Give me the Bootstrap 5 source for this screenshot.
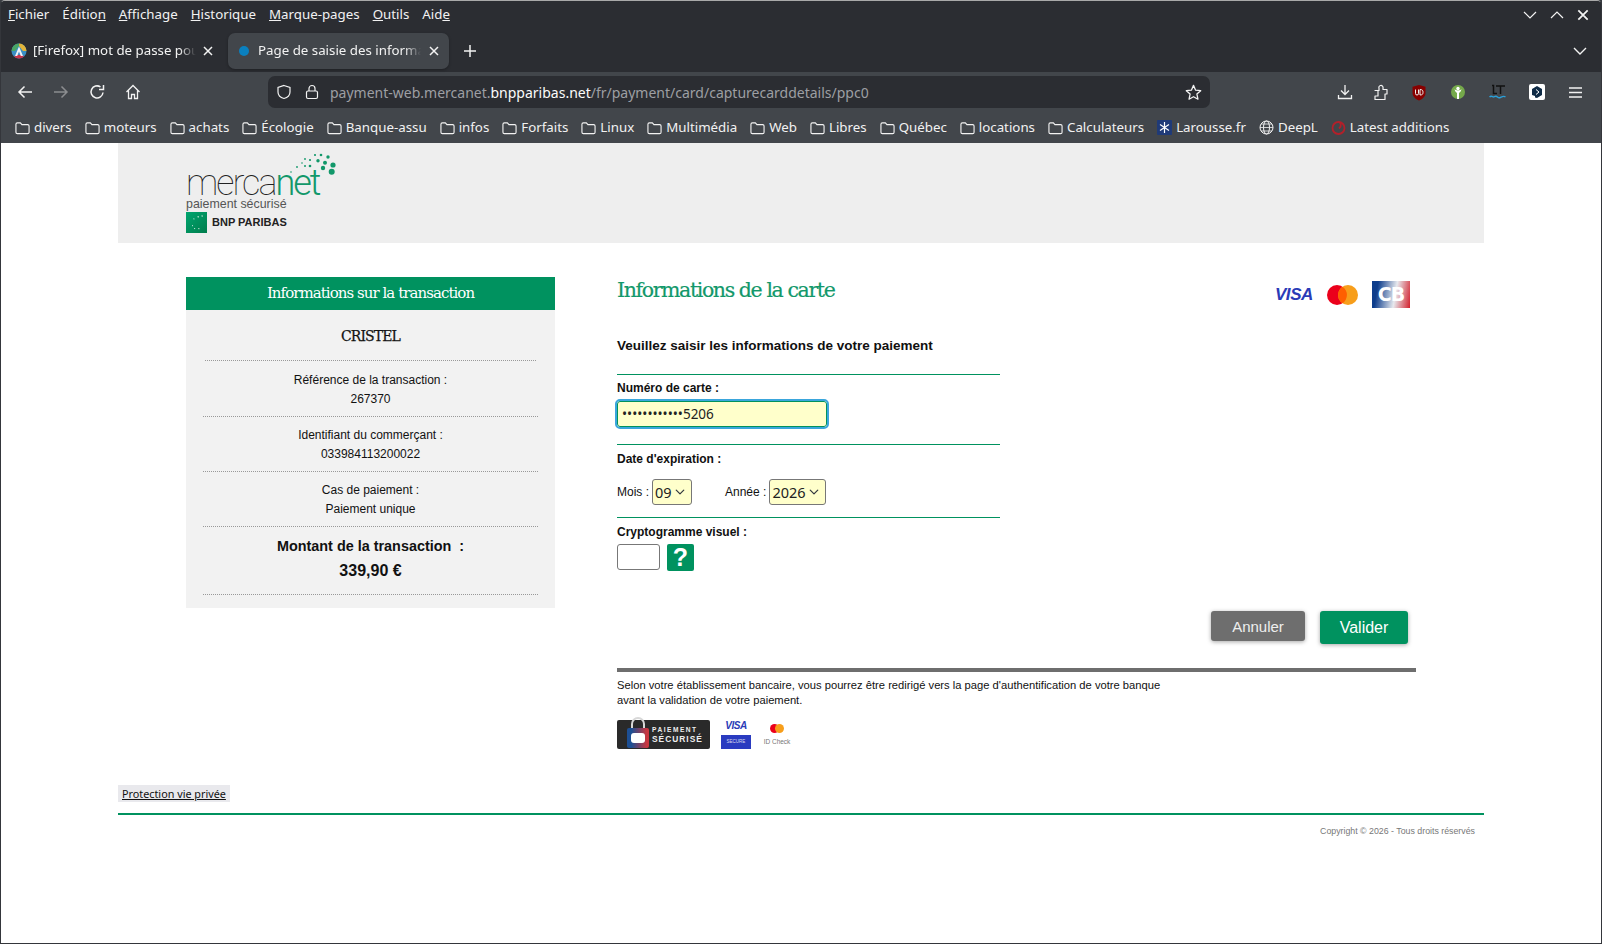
<!DOCTYPE html>
<html lang="fr">
<head>
  <meta charset="UTF-8">
  <meta name="viewport" content="width=device-width, initial-scale=1.0">
  <title>Page de saisie des informations</title>
  <link href="https://cdn.jsdelivr.net/npm/bootstrap@5.3.0/dist/css/bootstrap.min.css" rel="stylesheet">
  <style>
    html, body { height: 100%; }
    body {
      background: #3a3d42;
      font-family: "Liberation Sans", Arial, sans-serif;
      color: #111;
      overflow: hidden;
    }
    .fenetre { height: 944px; border-radius: 5px 5px 0 0; overflow: hidden; border: 1px solid #34363b; border-top-color: #a9a9a9; display: flex; flex-direction: column; }
    .chrome { font-family: "Noto Sans", sans-serif; color: #f2f2f2; font-size: 13.3px; }
    .barre-menu { height: 28px; background: #2b2d32; padding-left: 7px; gap: 13px; flex: none; }
    .barre-menu span { line-height: 1; }
    .fen-btns { gap: 11px; padding-right: 11px; }
    .barre-onglets { height: 43px; background: #2b2d32; flex: none; }
    .onglet { height: 36px; width: 227px; flex: none; padding: 0 14px 0 10px; gap: 6px; border-radius: 7px; }
    .onglet.actif { background: #42464b; width: 221px; gap: 7px; box-shadow: 0 1px 3px rgba(0,0,0,.3); padding: 0 9px; }
    .onglet-titre { flex: 1; white-space: nowrap; overflow: hidden; -webkit-mask-image: linear-gradient(to right, #000 90%, transparent); mask-image: linear-gradient(to right, #000 90%, transparent); }
    .plus-onglet { margin-left: 14px; }
    .chevron-onglets { margin-right: 13px; }
    .barre-outils { height: 40px; background: #42464b; padding: 0 10px 0 0; flex: none; }
    .zone-nav { width: 267px; flex: none; padding-left: 16px; gap: 20px; }
    .zone-url { width: 942px; height: 32px; background: #2b2d32; border-radius: 7px; padding: 0 8px 0 8px; flex: none; }
    .url-txt { font-size: 14px; color: #9d9fa3; margin-left: 10px; flex: 1; white-space: nowrap; }
    .url-txt b { font-weight: 400; color: #fbfbfb; }
    .zone-ext { flex: 1; gap: 23px; padding-left: 127px; }
    .ext-serre { margin-left: -3px; }
    .ext-serre + svg { margin-left: -1px; }
    .barre-favoris { height: 31px; background: #42464b; padding-left: 14px; gap: 13px; flex: none; white-space: nowrap; }
    .favori { gap: 4px; }
    .page { flex: 1; background: #fff; }
    .cadre { width: 1366px; margin-left: 117px; }
    .entete { height: 100px; background: #eee; padding-left: 68px; }
    .logo { width: 150px; position: relative; }
    .logo-mot { font-family: Roboto, sans-serif; font-weight: 100; font-size: 36px; line-height: 30px; letter-spacing: -2px; color: #222; padding-top: 25px; }
    .logo-mot em { font-style: normal; color: #12986a; font-weight: 300; }
    .logo-points { position: absolute; right: 0; top: 10px; }
    .logo-sous { font-size: 12.4px; line-height: 12px; color: #555; }
    .logo-bnp { gap: 5px; margin-top: 2px; font-size: 11px; font-weight: 700; color: #222; }
    .corps { padding: 34px 0 0 68px; gap: 62px; }
    .panneau { width: 369px; flex: none; }
    .panneau-titre { height: 33px; line-height: 32px; background: #00925f; color: #fff; text-align: center; font-family: "DejaVu Serif", serif; font-size: 15px; letter-spacing: -.95px; }
    .panneau-corps { background: #f2f2f2; height: 298px; padding: 0 17px; text-align: center; font-size: 12px; line-height: 19px; }
    .nom-client { font-family: "DejaVu Serif", serif; font-size: 14px; letter-spacing: -.9px; height: 51px; padding-top: 17px; border-bottom: 1px dotted #999; margin: 0 2px; -webkit-text-stroke: .25px #111; }
    .bloc-info { height: 55px; border-bottom: 1px dotted #999; padding-top: 9px; }
    .nom-client + .bloc-info { height: 56px; padding-top: 10px; }
    .bloc-montant { height: 68px; border-bottom: 1px dotted #999; font-weight: 700; font-size: 14.4px; padding-top: 7px; line-height: 24px; }
    .bloc-montant div + div { font-size: 16px; margin-top: 1px; }
    .formulaire { width: 799px; flex: none; }
    .titre-carte { font-family: "DejaVu Serif", serif; font-size: 20.5px; font-weight: 400; color: #12986a; line-height: 26px; letter-spacing: -1.4px; margin: 0; -webkit-text-stroke: .2px #12986a; }
    .logos-cartes { gap: 14px; padding-right: 6px; padding-top: 4px; }
    .visa { font-style: italic; font-weight: 700; color: #2a3bb7; font-size: 17px; line-height: 1; letter-spacing: -.4px; }
    .cb { width: 38px; height: 27px; background: linear-gradient(100deg, #0d3d8c 15%, #e7e9ee 60%, #d3202c); color: #fff; font-family: "DejaVu Sans", sans-serif; font-weight: 700; font-size: 19px; line-height: 27px; letter-spacing: -1px; text-align: center; }
    .consigne { font-size: 13.5px; font-weight: 700; margin: 29px 0 0; line-height: 18px; }
    .champs { width: 383px; margin-top: 19px; }
    .champ { border-top: 1px solid #00925f; padding-top: 7px; }
    .champ-num { height: 70px; padding-top: 6px; }
    .champ-date { height: 73px; }
    .ligne-date { margin-top: 13px; }
    .ligne-crypto { margin-top: 5px; gap: 7px; }
    .etiq { display: block; font-size: 12px; font-weight: 700; line-height: 14px; margin: 0; }
    .saisie-num { display: block; width: 210px; height: 26px; margin-top: 6px; background: #ffffcb; border: 1px solid #00925f; border-radius: 3px; outline: 2px solid #3aa6dc; padding: 0 4px; font-family: "Noto Sans", sans-serif; font-size: 13.5px; color: #222; }
    .mini-lib { font-size: 12px; margin-right: 3px; }
    .lib-annee { margin-left: 33px; }
    .form-select.choix { width: auto; height: 26px; padding: 0 19px 0 2px; background-color: #ffffcb; border: 1px solid #777; border-radius: 3px; font-family: "Noto Sans", sans-serif; font-size: 14.5px; line-height: 1; color: #222; background-position: right 5px center; background-size: 12px 10px; box-shadow: none; }
    .saisie-crypto { width: 43px; height: 26px; border: 1px solid #777; border-radius: 3px; background: #fff; padding: 0 4px; }
    .aide-btn { width: 27px; height: 27px; background: #00925f; color: #fff; border: 0; border-radius: 2px; padding: 0; font-family: "Liberation Sans", sans-serif; font-weight: 700; font-size: 25px; line-height: 27px; }
    .actions { gap: 15px; padding-right: 8px; margin-top: 40px; }
    .btn.annuler, .btn.valider { color: #fff; border: 0; border-radius: 3px; line-height: 1; padding: 0; box-shadow: 0 1px 4px rgba(0,0,0,.35); }
    .btn.annuler { width: 94px; height: 30px; background: #6e6e6e; color: #eee; font-size: 15px; }
    .btn.valider { width: 88px; height: 33px; background: #00925f; font-size: 16px; }
    .filet-gris { height: 4px; background: #6e6e6e; margin-top: 24px; }
    .mention { font-size: 11.2px; line-height: 15px; color: #111; margin: 6px 0 0; }
    .labels { gap: 11px; margin-top: 12px; }
    .badge-securise { width: 93px; height: 29px; background: #2a2a2a; border-radius: 2px; position: relative; color: #eee; padding-left: 35px; font-weight: 700; font-size: 8.4px; line-height: 10px; letter-spacing: 1px; }
    .badge-securise svg { position: absolute; left: 9px; top: -3px; }
    .badge-securise small { display: block; font-size: 6.6px; font-weight: 700; letter-spacing: 1.5px; line-height: 9px; }
    .vs { width: 30px; text-align: center; }
    .vs .visa { font-size: 10px; display: block; line-height: 12px; }
    .vs-bleu { height: 14px; background: #2a3bc0; color: #dde; font-size: 4.5px; line-height: 14px; margin-top: 3px; }
    .idc { font-size: 6.5px; color: #777; text-align: center; line-height: 9px; width: 30px; }
    .lien-vie { display: block; width: 112px; background: #e9e9ed; padding: 0 0 0 4px; height: 17px; line-height: 17px; font-family: "Noto Sans", sans-serif; font-size: 10.8px; color: #111; margin-top: 36px; white-space: nowrap; }
    .pied { border-top: 2px solid #00925f; margin-top: 11px; text-align: right; font-size: 8.8px; color: #777; padding: 10px 9px 0 0; line-height: 12px; }
  </style>
</head>
<body>
<svg width="0" height="0" class="d-block" aria-hidden="true">
  <symbol id="dossier" viewBox="0 0 16 14"><path d="M1 3a1.500 1.500 0 0 1 1.500-1.500h3.200L7.400 3.400h6.100A1.500 1.500 0 0 1 15 4.900v6.600A1.500 1.500 0 0 1 13.500 13h-11A1.500 1.500 0 0 1 1 11.500z" fill="none" stroke="#f2f2f2" stroke-width="1.200"/></symbol>
  <symbol id="croix" viewBox="0 0 12 12"><path d="M2 2l8 8M10 2l-8 8" stroke="#f2f2f2" stroke-width="1.500" fill="none"/></symbol>
</svg>

<div class="fenetre">
  <div class="chrome">
    <div class="barre-menu d-flex align-items-center">
      <span><u>F</u>ichier</span><span>Éditio<u>n</u></span><span><u>A</u>ffichage</span><span><u>H</u>istorique</span><span><u>M</u>arque-pages</span><span><u>O</u>utils</span><span>Aid<u>e</u></span>
      <div class="ms-auto d-flex align-items-center fen-btns">
        <svg width="16" height="16" viewBox="0 0 16 16"><path d="M2 5l6 6 6-6" fill="none" stroke="#f2f2f2" stroke-width="1.200"/></svg>
        <svg width="16" height="16" viewBox="0 0 16 16"><path d="M2 11l6-6 6 6" fill="none" stroke="#f2f2f2" stroke-width="1.200"/></svg>
        <svg width="14" height="14"><use href="#croix"/></svg>
      </div>
    </div>
    <div class="barre-onglets d-flex align-items-center">
      <div class="onglet d-flex align-items-center">
        <svg width="16" height="16" viewBox="0 0 16 16"><circle cx="8" cy="8" r="7.500" fill="#3b8fc4"/><path d="M8 .5A7.500 7.500 0 0 1 15.500 8H12L8 3z" fill="#e2b43a"/><path d="M.5 8H4l4-5V.5A7.500 7.500 0 0 0 .5 8" fill="#4aa564"/><path d="M3 13.500a7.500 7.500 0 0 0 10 0L11 12H5z" fill="#c8344a"/><path d="M8 3.500L12 13H9.800L8 8.500 6.200 13H4z" fill="#eef2f6"/></svg>
        <span class="onglet-titre">[Firefox] mot de passe pour</span>
        <svg width="12" height="12"><use href="#croix"/></svg>
      </div>
      <div class="onglet actif d-flex align-items-center">
        <svg width="14" height="14" viewBox="0 0 14 14"><circle cx="7" cy="7" r="5" fill="#0a80bf"/></svg>
        <span class="onglet-titre">Page de saisie des informations</span>
        <svg width="12" height="12"><use href="#croix"/></svg>
      </div>
      <svg class="plus-onglet" width="14" height="14" viewBox="0 0 14 14"><path d="M7 1v12M1 7h12" stroke="#f2f2f2" stroke-width="1.500"/></svg>
      <svg class="ms-auto chevron-onglets" width="16" height="16" viewBox="0 0 16 16"><path d="M2 5l6 6 6-6" fill="none" stroke="#f2f2f2" stroke-width="1.400"/></svg>
    </div>
    <div class="barre-outils d-flex align-items-center">
      <div class="zone-nav d-flex align-items-center">
        <svg width="16" height="16" viewBox="0 0 16 16"><path d="M15 8H2M7.500 2.500L2 8l5.500 5.500" fill="none" stroke="#f2f2f2" stroke-width="1.500"/></svg>
        <svg width="16" height="16" viewBox="0 0 16 16"><path d="M1 8h13M8.500 2.500L14 8l-5.500 5.500" fill="none" stroke="#8b8d90" stroke-width="1.500"/></svg>
        <svg width="16" height="16" viewBox="0 0 16 16"><path d="M14 8.500A6 6 0 1 1 11.500 3M14.500 1v4.500H10" fill="none" stroke="#f2f2f2" stroke-width="1.500"/></svg>
        <svg width="16" height="16" viewBox="0 0 16 16"><path d="M1.500 8L8 1.500 14.500 8M3.500 6.500V14.500h3v-4h3v4h3V6.500" fill="none" stroke="#f2f2f2" stroke-width="1.300"/></svg>
      </div>
      <div class="zone-url d-flex align-items-center">
        <svg width="16" height="16" viewBox="0 0 16 16" class="me-2"><path d="M8 1.500l6 2v4.500c0 3.500-2.500 5.500-6 6.500-3.500-1-6-3-6-6.500V3.500z" fill="none" stroke="#f2f2f2" stroke-width="1.200"/></svg>
        <svg width="16" height="16" viewBox="0 0 16 16" class="ms-1"><rect x="2.500" y="7" width="11" height="7.500" rx="1.500" fill="none" stroke="#f2f2f2" stroke-width="1.200"/><path d="M5 7V4.500a3 3 0 0 1 6 0V7" fill="none" stroke="#f2f2f2" stroke-width="1.200"/></svg>
        <span class="url-txt">payment-web.mercanet.<b>bnpparibas.net</b>/fr/payment/card/capturecarddetails/ppc0</span>
        <svg width="17" height="17" viewBox="0 0 16 16"><path d="M8 1.300l2 4.500 4.800.5-3.600 3.200 1 4.800L8 12l-4.200 2.300 1-4.800L1.200 6.300 6 5.800z" fill="none" stroke="#f2f2f2" stroke-width="1.200" stroke-linejoin="round"/></svg>
      </div>
      <div class="zone-ext d-flex align-items-center">
        <svg width="16" height="16" viewBox="0 0 16 16"><path d="M8 1v9M4 6.500L8 10.500l4-4M1.500 11v3.500h13V11" fill="none" stroke="#f2f2f2" stroke-width="1.300"/></svg>
        <svg class="ext-serre" width="16" height="17" viewBox="0 0 16 17"><path d="M2 6.500h4V4.200a2 2 0 0 1 1.500-2.700c1.500-.3 3 .9 2.500 2.700v1.300h4v4.500h-2v5.500H2v-3.500h3v-5.500z" fill="none" stroke="#f2f2f2" stroke-width="1.200" stroke-linejoin="round"/></svg>
        <svg width="16" height="17" viewBox="0 0 16 17"><path d="M8 1l6.500 1.800V9c0 3.500-3 6-6.500 7.500C4.500 15 1.500 12.500 1.500 9V2.800z" fill="#800"/><path d="M4.500 5.500v4a1.500 1.500 0 0 0 3 0v-4M9 5.500v5.500c2.500 0 3-1 3-2.700S11.500 5.500 9 5.500z" fill="none" stroke="#eee" stroke-width="1"/></svg>
        <svg width="16" height="16" viewBox="0 0 16 16"><circle cx="8" cy="8" r="7" fill="#75a94b"/><circle cx="8" cy="4.500" r="1.700" fill="#fff"/><path d="M8 6.500c-2 0-3-.8-3.500-1.500.5 3 2 3.500 2.500 4v6h2V9c.5-.5 2-1 2.500-4-.5.700-1.500 1.500-3.500 1.500" fill="#fff"/></svg>
        <svg width="17" height="16" viewBox="0 0 17 16"><path d="M3 1.500h1.500v8H8M7 2h9M11.500 2v8" fill="none" stroke="#111" stroke-width="1.500"/><path d="M.5 13c2-2 3 0 4 0s2-2 4-0 3 0 4 0 2-1.500 4 0" fill="none" stroke="#2a9fd8" stroke-width="1.400"/></svg>
        <svg width="16" height="16" viewBox="0 0 16 16"><rect width="16" height="16" rx="2" fill="#fff"/><path d="M8 2l5 3v6l-5 3-2-.5V12L3 11V5z" fill="#0f2b46"/><path d="M7 5.500L10 8l-3 2.500" fill="none" stroke="#fff" stroke-width="1"/></svg>
        <svg width="15" height="13" viewBox="0 0 15 13"><path d="M1 2h13M1 6.500h13M1 11h13" stroke="#f2f2f2" stroke-width="1.300"/></svg>
      </div>
    </div>
    <div class="barre-favoris d-flex align-items-center">
      <span class="favori d-flex align-items-center"><svg width="15" height="14"><use href="#dossier"/></svg>divers</span>
      <span class="favori d-flex align-items-center"><svg width="15" height="14"><use href="#dossier"/></svg>moteurs</span>
      <span class="favori d-flex align-items-center"><svg width="15" height="14"><use href="#dossier"/></svg>achats</span>
      <span class="favori d-flex align-items-center"><svg width="15" height="14"><use href="#dossier"/></svg>Écologie</span>
      <span class="favori d-flex align-items-center"><svg width="15" height="14"><use href="#dossier"/></svg>Banque-assu</span>
      <span class="favori d-flex align-items-center"><svg width="15" height="14"><use href="#dossier"/></svg>infos</span>
      <span class="favori d-flex align-items-center"><svg width="15" height="14"><use href="#dossier"/></svg>Forfaits</span>
      <span class="favori d-flex align-items-center"><svg width="15" height="14"><use href="#dossier"/></svg>Linux</span>
      <span class="favori d-flex align-items-center"><svg width="15" height="14"><use href="#dossier"/></svg>Multimédia</span>
      <span class="favori d-flex align-items-center"><svg width="15" height="14"><use href="#dossier"/></svg>Web</span>
      <span class="favori d-flex align-items-center"><svg width="15" height="14"><use href="#dossier"/></svg>Libres</span>
      <span class="favori d-flex align-items-center"><svg width="15" height="14"><use href="#dossier"/></svg>Québec</span>
      <span class="favori d-flex align-items-center"><svg width="15" height="14"><use href="#dossier"/></svg>locations</span>
      <span class="favori d-flex align-items-center"><svg width="15" height="14"><use href="#dossier"/></svg>Calculateurs</span>
      <span class="favori d-flex align-items-center"><svg width="15" height="15" viewBox="0 0 15 15"><rect width="15" height="15" rx="1" fill="#1f3a78"/><path d="M7.500 2v11M3 4.500l9 6M12 4.500l-9 6" stroke="#fff" stroke-width="1.200"/></svg>Larousse.fr</span>
      <span class="favori d-flex align-items-center"><svg width="15" height="15" viewBox="0 0 15 15"><circle cx="7.500" cy="7.500" r="6.500" fill="none" stroke="#f2f2f2"/><ellipse cx="7.500" cy="7.500" rx="3" ry="6.500" fill="none" stroke="#f2f2f2"/><path d="M1 7.500h13M2 4h11M2 11h11" stroke="#f2f2f2" stroke-width=".8"/></svg>DeepL</span>
      <span class="favori d-flex align-items-center"><svg width="15" height="15" viewBox="0 0 15 15"><circle cx="7.500" cy="8" r="6" fill="none" stroke="#b3202a" stroke-width="1.800"/><path d="M7 1.500c3 1 4 4.500 1 7" fill="none" stroke="#b3202a" stroke-width="1.800"/></svg>Latest additions</span>
    </div>
  </div>

  <div class="page">
    <div class="cadre">
      <div class="entete">
        <div class="logo">
          <svg class="logo-points" width="60" height="28" viewBox="0 0 60 28" fill="#12986a"><circle cx="55.700" cy="18.700" r="3"/><circle cx="57" cy="12" r="2.600"/><circle cx="47" cy="15" r="2.200"/><circle cx="49" cy="9.700" r="2"/><circle cx="42" cy="7.700" r="1.700"/><circle cx="52" cy="4" r="1.700"/><circle cx="45" cy="2" r="1.300"/><circle cx="39" cy="2" r="1.100"/><circle cx="34" cy="7" r="1.100"/><circle cx="29" cy="6" r=".9"/><circle cx="34" cy="13" r="1.300"/><circle cx="29" cy="13" r="1"/><circle cx="21" cy="14" r=".9"/><circle cx="15" cy="19" r=".8"/><circle cx="26" cy="10" r=".8"/></svg>
          <div class="logo-mot">merca<em>net</em></div>
          <div class="logo-sous">paiement sécurisé</div>
          <div class="logo-bnp d-flex align-items-center">
            <svg width="21" height="21" viewBox="0 0 21 21"><defs><linearGradient id="vert-bnp" x1="0" y1="0" x2="1" y2="1"><stop offset="0" stop-color="#00a56f"/><stop offset="1" stop-color="#007d4c"/></linearGradient></defs><rect width="21" height="21" fill="url(#vert-bnp)"/><path d="M11 5l1.500-1 .5 1.500zM15 4l1.500-.8.3 1.600zM7 7l1.200-.8.2 1.400zM6 13l1.200.4-.8 1zM8 16l1.400.2-.9 1zM12 16.500l1.400-.4-.3 1.400z" fill="#fff"/></svg>
            BNP PARIBAS
          </div>
        </div>
      </div>

      <div class="corps d-flex align-items-start">
        <div class="panneau">
          <div class="panneau-titre">Informations sur la transaction</div>
          <div class="panneau-corps">
            <div class="nom-client">CRISTEL</div>
            <div class="bloc-info"><div>Référence de la transaction :</div><div>267370</div></div>
            <div class="bloc-info"><div>Identifiant du commerçant :</div><div>033984113200022</div></div>
            <div class="bloc-info"><div>Cas de paiement :</div><div>Paiement unique</div></div>
            <div class="bloc-montant"><div>Montant de la transaction&nbsp; :</div><div>339,90 €</div></div>
          </div>
        </div>

        <div class="formulaire">
          <div class="d-flex justify-content-between align-items-start">
            <h2 class="titre-carte">Informations de la carte</h2>
            <div class="logos-cartes d-flex align-items-center">
              <span class="visa">VISA</span>
              <svg width="31" height="20" viewBox="0 0 31 20"><circle cx="10" cy="10" r="10" fill="#eb001b"/><circle cx="21" cy="10" r="10" fill="#f79e1b"/><path d="M15.500 1.700a10 10 0 0 1 0 16.600 10 10 0 0 1 0-16.600" fill="#ff5f00"/></svg>
              <span class="cb d-block">CB</span>
            </div>
          </div>
          <p class="consigne">Veuillez saisir les informations de votre paiement</p>
          <form class="champs" onsubmit="return false">
            <div class="champ champ-num">
              <label class="etiq" for="num-carte">Numéro de carte :</label>
              <input class="saisie-num" id="num-carte" type="text" value="••••••••••••5206">
            </div>
            <div class="champ champ-date">
              <span class="etiq">Date d'expiration :</span>
              <div class="d-flex align-items-center ligne-date">
                <label class="mini-lib" for="mois">Mois :</label>
                <select class="form-select choix" id="mois"><option>09</option></select>
                <label class="mini-lib lib-annee" for="annee">Année :</label>
                <select class="form-select choix" id="annee"><option>2026</option></select>
              </div>
            </div>
            <div class="champ">
              <label class="etiq" for="crypto">Cryptogramme visuel :</label>
              <div class="d-flex align-items-start ligne-crypto">
                <input class="saisie-crypto" id="crypto" type="text">
                <button type="button" class="aide-btn">?</button>
              </div>
            </div>
          </form>
          <div class="actions d-flex justify-content-end align-items-start">
            <button type="button" class="btn annuler">Annuler</button>
            <button type="button" class="btn valider">Valider</button>
          </div>
          <div class="filet-gris"></div>
          <p class="mention">Selon votre établissement bancaire, vous pourrez être redirigé vers la page d'authentification de votre banque<br>avant la validation de votre paiement.</p>
          <div class="labels d-flex align-items-center">
            <div class="badge-securise d-flex flex-column justify-content-center">
              <svg width="24" height="32" viewBox="0 0 24 32"><defs><linearGradient id="cadenas" x1="0" y1="0" x2="1" y2="0"><stop offset=".2" stop-color="#1d4f94"/><stop offset=".9" stop-color="#c9353f"/></linearGradient></defs><path d="M6 12V7a6 6 0 0 1 12 0v5" fill="none" stroke="#d8d8d8" stroke-width="2"/><rect x="1" y="11" width="22" height="20" rx="2" fill="url(#cadenas)"/><rect x="5" y="16" width="14" height="10" rx="3" fill="#fff"/></svg>
              <small>PAIEMENT</small>SÉCURISÉ
            </div>
            <div class="vs"><span class="visa">VISA</span><div class="vs-bleu">SECURE</div></div>
            <div class="idc">
              <svg width="14" height="9" viewBox="0 0 31 20" class="d-block mx-auto mb-1"><circle cx="10" cy="10" r="10" fill="#eb001b"/><circle cx="21" cy="10" r="10" fill="#f79e1b"/></svg>
              ID Check
            </div>
          </div>
        </div>
      </div>

      <a class="lien-vie" href="#">Protection vie privée</a>
      <div class="pied">Copyright © 2026 - Tous droits réservés</div>
    </div>
  </div>
</div>
<script src="https://cdn.jsdelivr.net/npm/bootstrap@5.3.0/dist/js/bootstrap.bundle.min.js"></script>
</body>
</html>
